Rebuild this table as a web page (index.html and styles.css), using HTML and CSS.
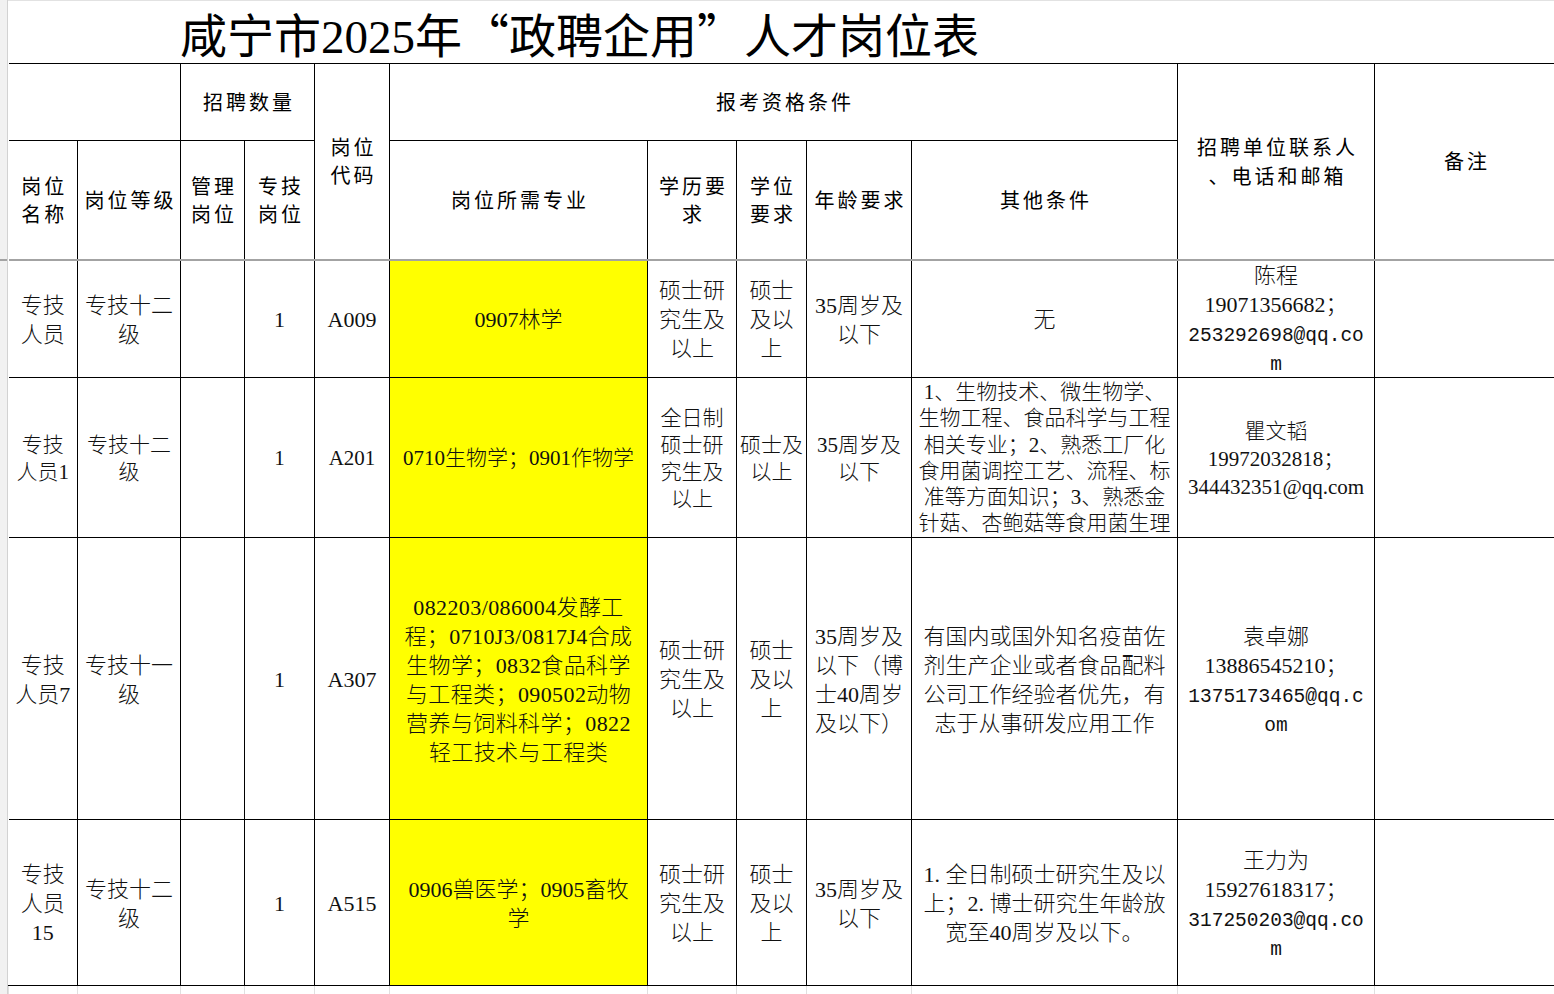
FILE: index.html
```html
<!DOCTYPE html>
<html lang="zh-CN">
<head>
<meta charset="utf-8">
<title>咸宁市2025年“政聘企用”人才岗位表</title>
<link rel="stylesheet" href="styles.css">
</head>
<body>
<div class="sheet">
  <div class="gutter"></div>
  <div class="main">
    <div class="title"><span class="title-text">咸宁市2025年<span class="q">“</span>政聘企用<span class="q">”</span>人才岗位表</span></div>
    <table class="grid">
      <colgroup>
        <col class="c1"><col class="c2"><col class="c3"><col class="c4"><col class="c5"><col class="c6">
        <col class="c7"><col class="c8"><col class="c9"><col class="c10"><col class="c11"><col class="c12">
      </colgroup>
      <thead>
        <tr class="h1">
          <td colspan="2" class="first"></td>
          <td colspan="2">招聘数量</td>
          <td rowspan="2">岗位<br>代码</td>
          <td colspan="5">报考资格条件</td>
          <td rowspan="2" class="contact-h">招聘单位联系人<br>、电话和邮箱</td>
          <td rowspan="2">备注</td>
        </tr>
        <tr class="h2">
          <td class="first">岗位<br>名称</td>
          <td>岗位等级</td>
          <td>管理<br>岗位</td>
          <td>专技<br>岗位</td>
          <td>岗位所需专业</td>
          <td>学历要<br>求</td>
          <td>学位<br>要求</td>
          <td>年龄要求</td>
          <td>其他条件</td>
        </tr>
      </thead>
      <tbody>
        <tr class="r1">
          <td class="first">专技<br>人员</td>
          <td>专技十二<br>级</td>
          <td></td>
          <td>1</td>
          <td>A009</td>
          <td class="yel">0907林学</td>
          <td>硕士研<br>究生及<br>以上</td>
          <td>硕士<br>及以<br>上</td>
          <td>35周岁及<br>以下</td>
          <td>无</td>
          <td class="tight">陈程<br>19071356682；<br><span class="mono">253292698@qq.co</span><br><span class="mono">m</span></td>
          <td></td>
        </tr>
        <tr class="r2">
          <td class="first">专技<br>人员1</td>
          <td>专技十二<br>级</td>
          <td></td>
          <td>1</td>
          <td>A201</td>
          <td class="yel">0710生物学；0901作物学</td>
          <td>全日制<br>硕士研<br>究生及<br>以上</td>
          <td>硕士及<br>以上</td>
          <td>35周岁及<br>以下</td>
          <td class="top">1、生物技术、微生物学、<br>生物工程、食品科学与工程<br>相关专业；2、熟悉工厂化<br>食用菌调控工艺、流程、标<br>准等方面知识；3、熟悉金<br>针菇、杏鲍菇等食用菌生理</td>
          <td class="c-r2">瞿文韬<br>19972032818；<br>344432351@qq.com</td>
          <td></td>
        </tr>
        <tr class="r3">
          <td class="first">专技<br>人员7</td>
          <td>专技十一<br>级</td>
          <td></td>
          <td>1</td>
          <td>A307</td>
          <td class="yel wide">082203/086004发酵工<br>程；0710J3/0817J4合成<br>生物学；0832食品科学<br>与工程类；090502动物<br>营养与饲料科学；0822<br>轻工技术与工程类</td>
          <td>硕士研<br>究生及<br>以上</td>
          <td>硕士<br>及以<br>上</td>
          <td>35周岁及<br>以下（博<br>士40周岁<br>及以下）</td>
          <td>有国内或国外知名疫苗佐<br>剂生产企业或者食品配料<br>公司工作经验者优先，有<br>志于从事研发应用工作</td>
          <td>袁卓娜<br>13886545210；<br><span class="mono">1375173465@qq.c</span><br><span class="mono">om</span></td>
          <td></td>
        </tr>
        <tr class="r4">
          <td class="first">专技<br>人员<br>15</td>
          <td>专技十二<br>级</td>
          <td></td>
          <td>1</td>
          <td>A515</td>
          <td class="yel">0906兽医学；0905畜牧<br>学</td>
          <td>硕士研<br>究生及<br>以上</td>
          <td>硕士<br>及以<br>上</td>
          <td>35周岁及<br>以下</td>
          <td>1. 全日制硕士研究生及以<br>上；2. 博士研究生年龄放<br>宽至40周岁及以下。</td>
          <td>王力为<br>15927618317；<br><span class="mono">317250203@qq.co</span><br><span class="mono">m</span></td>
          <td></td>
        </tr>
        <tr class="blank">
          <td class="first"></td><td></td><td></td><td></td><td></td><td></td>
          <td></td><td></td><td></td><td></td><td></td><td></td>
        </tr>
      </tbody>
    </table>
  </div>
</div>
</body>
</html>
```
FILE: styles.css
```css
html, body {
  margin: 0;
  padding: 0;
  overflow: hidden;
  background: #fff;
}

.sheet {
  display: flex;
  width: 1620px;
  height: 994px;
}

.gutter {
  flex: none;
  width: 7px;
  height: 994px;
  border-right: 1px solid #d2d2d2;
  background: linear-gradient(to bottom, #f1f1f1 259px, #a3a3a3 259px, #a3a3a3 261px, #f1f1f1 261px);
}

.main {
  flex: none;
  width: 1548px;
}

.title {
  height: 63px;
  box-sizing: border-box;
  border-top: 1px solid #e2e2e2;
  padding-left: 172px;
  padding-top: 7px;
  font-family: "Liberation Serif", "Noto Sans CJK SC", serif;
  font-size: 47px;
  line-height: 50px;
  font-weight: 400;
  color: #000;
  white-space: nowrap;
}

.q {
  font-family: "Noto Sans CJK SC", sans-serif;
  font-feature-settings: "fwid" 1;
}

table.grid {
  border-collapse: collapse;
  table-layout: fixed;
  width: 1548px;
}

.c1 { width: 69px; }
.c2 { width: 103px; }
.c3 { width: 64px; }
.c4 { width: 70px; }
.c5 { width: 75px; }
.c6 { width: 258px; }
.c7 { width: 89px; }
.c8 { width: 70px; }
.c9 { width: 105px; }
.c10 { width: 266px; }
.c11 { width: 197px; }
.c12 { width: 182px; }

.grid td {
  border: 1px solid #000;
  padding: 0;
  text-align: center;
  vertical-align: middle;
  white-space: nowrap;
  overflow: hidden;
  font-family: "Liberation Serif", "Noto Sans CJK SC", serif;
  font-size: 22px;
  line-height: 29px;
  font-weight: 300;
  color: #111;
}

.grid tbody td {
  padding-top: 2px;
}

.grid tbody td.tight {
  padding-top: 0;
}

.grid td.first {
  border-left: none;
}

.grid thead td {
  font-family: "Noto Sans CJK SC", sans-serif;
  font-size: 20px;
  font-weight: 400;
  letter-spacing: 3px;
  padding-left: 3px;
  line-height: 28px;
  color: #000;
}

.grid thead td.contact-h {
  line-height: 29px;
}

.h1 { height: 77px; }
.h2 { height: 119px; }

.grid tbody tr.r1 td {
  border-top: 2px solid #a3a3a3;
}

.r1 { height: 118px; }
.r2 { height: 160px; }
.r3 { height: 282px; }
.r4 { height: 166px; }

.grid tr.r2 td {
  font-size: 21px;
  line-height: 27px;
}

.grid tr.r2 td.c-r2 {
  line-height: 28px;
}

.grid td.yel {
  background: #ffff00;
}

.grid td.wide {
  letter-spacing: 0.4px;
}

.grid tr.r2 td.top {
  vertical-align: top;
  padding-top: 1px;
  line-height: 26.3px;
}

.mono {
  font-family: "Liberation Mono", "Noto Sans CJK SC", monospace;
  font-size: 19.5px;
  line-height: 1;
}

.grid tr.blank {
  height: 20px;
}

.grid tr.blank td {
  border: 1px solid #e0e0e0;
  border-top: 1px solid #000;
}
```
